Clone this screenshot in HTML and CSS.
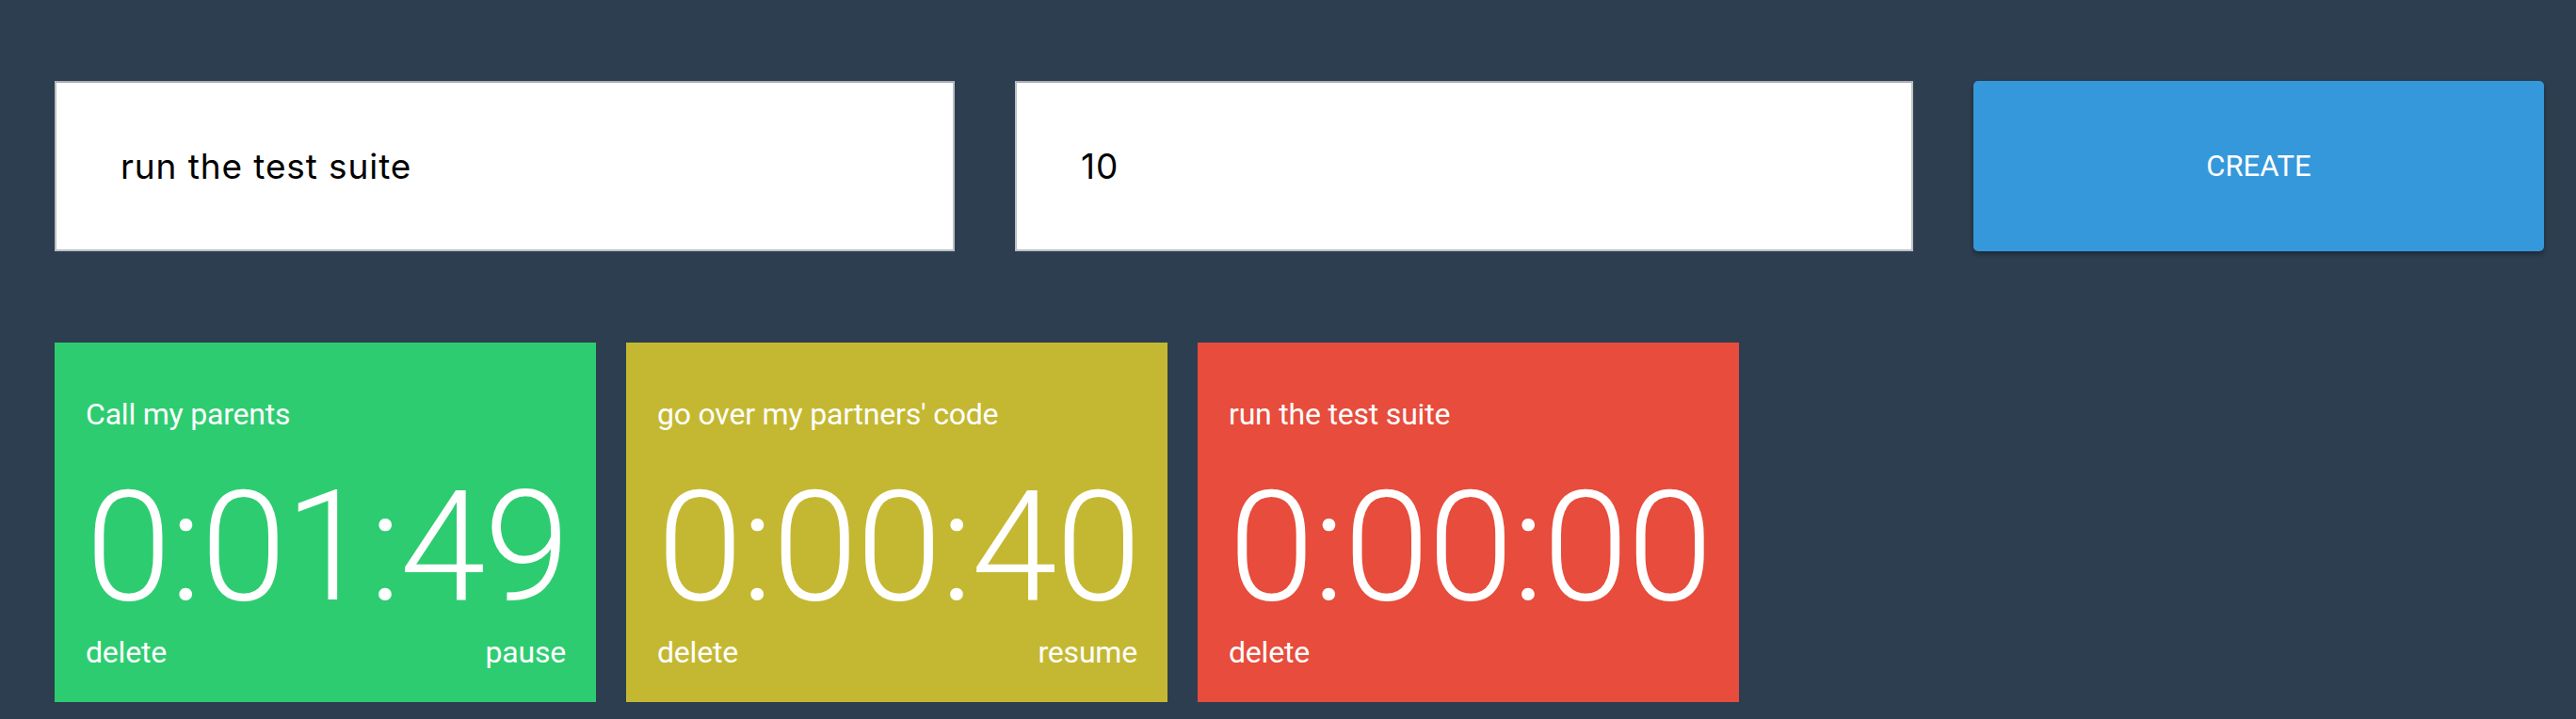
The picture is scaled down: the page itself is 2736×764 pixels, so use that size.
FILE: index.html
```html
<!DOCTYPE html>
<html>
<head>
<meta charset="utf-8">
<title>Timers</title>
<link rel="stylesheet" href="styles.css">
</head>
<body>
<div class="page">
  <form class="create-row">
    <input class="field field-name" type="text" value="run the test suite">
    <input class="field field-minutes" type="text" value="10">
    <button class="create-btn" type="button">CREATE</button>
  </form>
  <div class="timers">
    <div class="timer timer-green">
      <div class="timer-title">Call my parents</div>
      <div class="timer-clock">0:01:49</div>
      <div class="timer-actions"><span>delete</span><span>pause</span></div>
    </div>
    <div class="timer timer-yellow">
      <div class="timer-title">go over my partners' code</div>
      <div class="timer-clock">0:00:40</div>
      <div class="timer-actions"><span>delete</span><span>resume</span></div>
    </div>
    <div class="timer timer-red">
      <div class="timer-title">run the test suite</div>
      <div class="timer-clock">0:00:00</div>
      <div class="timer-actions"><span>delete</span></div>
    </div>
  </div>
</div>
</body>
</html>
```

FILE: styles.css
```css
html, body {
  margin: 0;
  padding: 0;
  background: #2d3e50;
  height: 100%;
}

.page {
  padding: 86px 0 0 58px;
  font-family: Roboto, "Liberation Sans", sans-serif;
}

.create-row {
  display: grid;
  grid-template-columns: 956px 954px 606px;
  column-gap: 64px;
  margin: 0;
}

.field {
  box-sizing: border-box;
  height: 181px;
  margin: 0;
  padding: 0 0 0 68px;
  border: 2px solid #bcc0c4;
  border-top-color: #a9adb1;
  background: #fff;
  font-family: Inter, "Liberation Sans", sans-serif;
  font-size: 37px;
  letter-spacing: 0.9px;
  color: #000;
  outline: none;
}

.create-btn {
  height: 181px;
  margin: 0;
  border: 0;
  border-radius: 5px;
  background: #3598db;
  color: #fff;
  font-family: Roboto, "Liberation Sans", sans-serif;
  font-size: 31px;
  box-shadow: 0 3px 5px rgba(0, 0, 0, 0.35);
}

.timers {
  display: flex;
  gap: 32px;
  margin-top: 97px;
}

.timer {
  box-sizing: border-box;
  width: 575px;
  height: 382px;
  padding: 58px 32px 33px 33px;
  color: #fff;
  display: flex;
  flex-direction: column;
}

.timer-green { background: #2ecc71; }
.timer-yellow { background: #c4b832; }
.timer-red { background: #e74c3c; }

.timer-title {
  font-size: 32px;
  line-height: 37.5px;
  letter-spacing: -0.2px;
}

.timer-clock {
  font-size: 164px;
  font-weight: 300;
  line-height: 166px;
  letter-spacing: -1.6px;
  margin-top: 38px;
  white-space: nowrap;
}

.timer-actions {
  display: flex;
  justify-content: space-between;
  font-size: 32px;
  line-height: 37.5px;
  letter-spacing: -0.2px;
  margin-top: 11px;
}
```
